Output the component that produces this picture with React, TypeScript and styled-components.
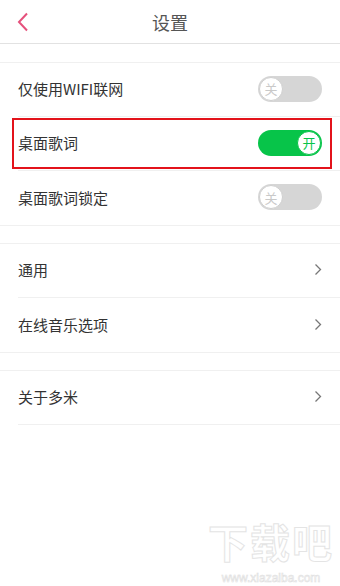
import React, { useState } from 'react';
import styled, { createGlobalStyle } from 'styled-components';

const GlobalStyle = createGlobalStyle`
	html, body {
		margin: 0;
		padding: 0;
		background: #fff;
	}
	body {
		font-family: "Noto Sans CJK SC", "Noto Sans", sans-serif;
	}
`;

const Page = styled.div`
	position: relative;
	width: 340px;
	height: 586px;
	overflow: hidden;
	background: #fff;
`;

const Header = styled.div`
	height: 44px;
	display: flex;
	align-items: center;
	justify-content: center;
	position: relative;
	border-bottom: 1px solid #e2e2e2;
	box-sizing: border-box;
`;

const BackButton = styled.div`
	position: absolute;
	left: 14px;
	top: 11px;
	width: 18px;
	height: 22px;
	display: flex;
	align-items: center;
	justify-content: center;
`;

const Title = styled.div`
	font-size: 18px;
	color: #555;
`;

const Gap = styled.div<{ $h?: number }>`
	height: ${p => p.$h ?? 18}px;
`;

const Group = styled.div<{ $noBottom?: boolean }>`
	border-top: 1px solid #f0f0f0;
	border-bottom: ${p => (p.$noBottom ? 'none' : '1px solid #f0f0f0')};
`;

const Row = styled.div<{ $last?: boolean }>`
	height: 54px;
	box-sizing: border-box;
	margin-left: 18px;
	padding-right: 18px;
	display: flex;
	align-items: center;
	justify-content: space-between;
	border-bottom: ${p => (p.$last ? 'none' : '1px solid #f0f0f0')};
	position: relative;
`;

const Label = styled.div`
	font-size: 15px;
	color: #333;
	margin-top: -2px;
`;

const Highlight = styled.div`
	position: absolute;
	left: -6px;
	right: 8px;
	top: 1px;
	bottom: 1px;
	border: 2px solid #e3131b;
	pointer-events: none;
`;

const Track = styled.div<{ $on: boolean }>`
	width: 64px;
	height: 26px;
	margin-top: -2px;
	border-radius: 13px;
	background: ${p => (p.$on ? '#07c449' : '#d6d6d6')};
	display: flex;
	align-items: center;
	justify-content: ${p => (p.$on ? 'flex-end' : 'flex-start')};
	padding: 0 1px;
	box-sizing: border-box;
	cursor: pointer;
`;

const Knob = styled.div<{ $on: boolean }>`
	width: 24px;
	height: 24px;
	border-radius: 50%;
	background: #fff;
	box-sizing: border-box;
	border: 1px solid ${p => (p.$on ? '#07c449' : '#cfcfcf')};
	display: flex;
	align-items: center;
	justify-content: center;
	font-size: 13px;
	line-height: 1;
	color: ${p => (p.$on ? '#07c449' : '#c9c9c9')};
`;

const Watermark = styled.div`
	position: absolute;
	right: 6px;
	bottom: 1px;
	display: flex;
	flex-direction: column;
	align-items: center;
	color: #fff;
	-webkit-text-stroke: 1px #e4e4e4;
	pointer-events: none;
`;

const WatermarkBig = styled.div`
	font-size: 40px;
	font-weight: 700;
	letter-spacing: 2px;
	line-height: 60px;
`;

const WatermarkSmall = styled.div`
	font-family: "Liberation Sans", sans-serif;
	font-size: 12px;
	line-height: 14px;
	-webkit-text-stroke: 0.6px #e0e0e0;
`;

function Switch({ on, onToggle }: { on: boolean; onToggle: () => void }) {
	return (
		<Track $on={on} onClick={onToggle}>
			<Knob $on={on}>{on ? '开' : '关'}</Knob>
		</Track>
	);
}

function Chevron() {
	return (
		<svg width="8" height="13" viewBox="0 0 8 13" style={{ marginTop: -2 }}>
			<path d="M1.5 1.5 L6.5 6.5 L1.5 11.5" fill="none" stroke="#777" strokeWidth="1.3" />
		</svg>
	);
}

export default function App() {
	const [wifi, setWifi] = useState(false);
	const [lyric, setLyric] = useState(true);
	const [lock, setLock] = useState(false);

	return (
		<Page>
			<GlobalStyle />
			<Header>
				<BackButton>
					<svg width="12" height="20" viewBox="0 0 12 20">
						<path d="M10 1.5 L2 10 L10 18.5" fill="none" stroke="#e5517c" strokeWidth="2" />
					</svg>
				</BackButton>
				<Title>设置</Title>
			</Header>
			<Gap />
			<Group>
				<Row>
					<Label>仅使用WIFI联网</Label>
					<Switch on={wifi} onToggle={() => setWifi(!wifi)} />
				</Row>
				<Row>
					<Highlight />
					<Label>桌面歌词</Label>
					<Switch on={lyric} onToggle={() => setLyric(!lyric)} />
				</Row>
				<Row $last>
					<Label>桌面歌词锁定</Label>
					<Switch on={lock} onToggle={() => setLock(!lock)} />
				</Row>
			</Group>
			<Gap $h={17} />
			<Group>
				<Row>
					<Label>通用</Label>
					<Chevron />
				</Row>
				<Row $last>
					<Label>在线音乐选项</Label>
					<Chevron />
				</Row>
			</Group>
			<Gap $h={17} />
			<Group $noBottom>
				<Row>
					<Label>关于多米</Label>
					<Chevron />
				</Row>
			</Group>
			<Watermark>
				<WatermarkBig>下载吧</WatermarkBig>
				<WatermarkSmall>www.xiazaiba.com</WatermarkSmall>
			</Watermark>
		</Page>
	);
}
